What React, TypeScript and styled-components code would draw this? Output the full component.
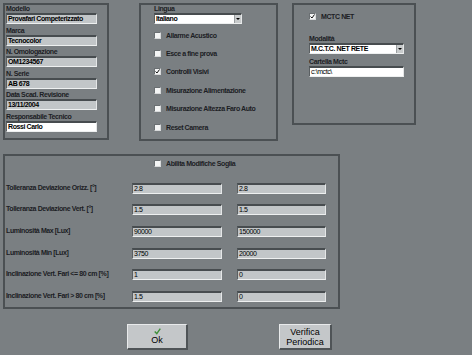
import { Fragment } from "react";
import styled, { createGlobalStyle, css } from "styled-components";

const BG = "#7a7f82";
const EDGE = "#4b5053";
const FIELD = "#c2c6c8";
const INK = "#1c2024";

// the original uses a condensed bold face; squeeze Liberation Sans to match
const tight = css`
  font-family: "Liberation Sans", Arial, sans-serif;
  font-size: 7px;
  letter-spacing: -0.4px;
`;

const GlobalStyle = createGlobalStyle`
  html, body {
    margin: 0;
    padding: 0;
    background: ${BG};
  }
  body {
    font-family: "Liberation Sans", Arial, sans-serif;
  }
`;

const Screen = styled.div`
  width: 472px;
  height: 355px;
  background: ${BG};
  overflow: hidden;
`;

const TopRow = styled.div`
  display: flex;
  align-items: flex-start;
  padding: 3px 0 0 3px;
`;

const Panel = styled.div<{ $w: number; $h: number; $ml?: number; $pl: number }>`
  box-sizing: border-box;
  width: ${(p) => p.$w}px;
  height: ${(p) => p.$h}px;
  margin-left: ${(p) => p.$ml ?? 0}px;
  padding-left: ${(p) => p.$pl}px;
  border: 2px solid ${EDGE};
  display: flex;
  flex-direction: column;
`;

const Stack = styled.div`
  display: flex;
  flex-direction: column;
  gap: 2.6px;
`;

const Group = styled.div`
  display: flex;
  flex-direction: column;
`;

const Label = styled.div<{ $mt?: number }>`
  ${tight};
  margin-top: ${(p) => p.$mt ?? 0}px;
  height: 8px;
  line-height: 8px;
  font-weight: bold;
  color: ${INK};
  white-space: nowrap;
`;

const Field = styled.div<{ $w: number; $white?: boolean; $bold?: boolean }>`
  ${tight};
  box-sizing: border-box;
  width: ${(p) => p.$w}px;
  height: 11px;
  background: ${(p) => (p.$white ? "#ffffff" : FIELD)};
  border-top: 2px solid #474c4f;
  border-left: 1px solid #5a5f62;
  border-bottom: 1px solid #eef0f0;
  border-right: 1px solid #e4e6e7;
  padding-left: 1px;
  line-height: 8px;
  font-weight: ${(p) => (p.$bold ? "bold" : "normal")};
  color: #000;
  white-space: nowrap;
  overflow: hidden;
`;

const SelectBox = styled(Field)`
  position: relative;
`;

const DropButton = styled.span`
  position: absolute;
  right: 0;
  top: 0;
  width: 6px;
  height: 8px;
  background: #c8cbcc;
  border-left: 1px solid #9a9ea0;
  display: flex;
  align-items: center;
  justify-content: center;
  &::after {
    content: "";
    border-left: 2px solid transparent;
    border-right: 2px solid transparent;
    border-top: 2px solid #000;
  }
`;

const CheckList = styled.div`
  margin-top: 2px;
  display: flex;
  flex-direction: column;
`;

const CheckRow = styled.div<{ $h: number; $ml?: number }>`
  display: flex;
  align-items: center;
  height: ${(p) => p.$h}px;
  margin-left: ${(p) => p.$ml ?? 0}px;
  gap: 5px;
`;

const Box = styled.span`
  box-sizing: border-box;
  width: 7px;
  height: 7px;
  background: #f4f5f5;
  border-top: 1px solid #6a6f72;
  border-left: 1px solid #6a6f72;
  border-bottom: 1px solid #d8dadb;
  border-right: 1px solid #d8dadb;
  display: flex;
  align-items: center;
  justify-content: center;
`;

const CheckText = styled.span`
  ${tight};
  font-weight: bold;
  color: ${INK};
  white-space: nowrap;
`;

const Panel4 = styled(Panel)`
  margin: 13px 0 0 3px;
`;

const Grid = styled.div`
  margin-top: 5.6px;
  display: grid;
  grid-template-columns: 111px 90px 89px;
  grid-auto-rows: 21.6px;
  column-gap: 15px;
  align-items: center;
  padding-left: 1px;
`;

const RowLabel = styled.div`
  ${tight};
  font-weight: bold;
  color: ${INK};
  white-space: nowrap;
  margin-top: -2px;
`;

const ButtonRow = styled.div`
  display: flex;
  margin-top: 15px;
  padding-left: 127px;
  gap: 91px;
`;

const Button = styled.div<{ $w: number }>`
  box-sizing: border-box;
  width: ${(p) => p.$w}px;
  height: 26px;
  background: #c4c7c9;
  border-top: 1px solid #e8eaeb;
  border-left: 1px solid #e8eaeb;
  border-right: 2px solid #4f5457;
  border-bottom: 2px solid #4f5457;
  display: flex;
  flex-direction: column;
  align-items: center;
  justify-content: center;
  font-size: 9px;
  line-height: 10px;
  color: #000;
  text-align: center;
`;

const Tick = ({ size = 5, color = "#111" }: { size?: number; color?: string }) => (
  <svg width={size} height={size} viewBox="0 0 10 10">
    <path d="M1 5 L4 8 L9 1" fill="none" stroke={color} strokeWidth={2} />
  </svg>
);

const Check = ({ label, checked, h, ml }: { label: string; checked?: boolean; h: number; ml?: number }) => (
  <CheckRow $h={h} $ml={ml}>
    <Box>{checked && <Tick />}</Box>
    <CheckText>{label}</CheckText>
  </CheckRow>
);

const info = [
  ["Modello", "Provafari Competerizzato", false],
  ["Marca", "Tecnocolor", false],
  ["N. Omologazione", "OM1234567", false],
  ["N. Serie", "AB 678", false],
  ["Data Scad. Revisione", "13/11/2004", false],
  ["Responsabile Tecnico", "Rossi Carlo", true],
] as const;

const options = [
  ["Allarme Acustico", false],
  ["Esce a fine prova", false],
  ["Controlli Visivi", true],
  ["Misurazione Alimentazione", false],
  ["Misurazione Altezza Faro Auto", false],
  ["Reset Camera", false],
] as const;

const thresholds = [
  ["Tolleranza Deviazione Orizz. [°]", "2.8", "2.8"],
  ["Tolleranza Deviazione Vert. [°]", "1.5", "1.5"],
  ["Luminosità Max [Lux]", "90000", "150000"],
  ["Luminosità Min [Lux]", "3750", "20000"],
  ["Inclinazione Vert. Fari <= 80 cm [%]", "1", "0"],
  ["Inclinazione Vert. Fari > 80 cm [%]", "1.5", "0"],
];

export default function App() {
  return (
    <Screen>
      <GlobalStyle />
      <TopRow>
        <Panel $w={106} $h={137} $pl={1}>
          <Stack>
            {info.map(([label, value, white]) => (
              <Group key={label}>
                <Label>{label}</Label>
                <Field $w={91} $white={white} $bold>
                  {value}
                </Field>
              </Group>
            ))}
          </Stack>
        </Panel>

        <Panel $w={139} $h={138} $ml={30} $pl={13}>
          <Label>Lingua</Label>
          <SelectBox $w={88} $white $bold>
            Italiano
            <DropButton />
          </SelectBox>
          <CheckList>
            {options.map(([label, checked]) => (
              <Check key={label} label={label} checked={checked} h={18.4} />
            ))}
          </CheckList>
        </Panel>

        <Panel $w={124} $h={122} $ml={14} $pl={15}>
          <Check label="MCTC NET" checked h={22} />
          <Label $mt={8}>Modalità</Label>
          <SelectBox $w={95} $white $bold>
            M.C.T.C. NET RETE
            <DropButton />
          </SelectBox>
          <Label $mt={4}>Cartella Mctc</Label>
          <Field $w={95} $white>
            c:\mctc\
          </Field>
        </Panel>
      </TopRow>

      <Panel4 $w={337} $h={155} $pl={0}>
        <Check label="Abilita Modifiche Soglia" h={16} ml={149} />
        <Grid>
          {thresholds.map(([label, a, b]) => (
            <Fragment key={label}>
              <RowLabel>{label}</RowLabel>
              <Field $w={90}>{a}</Field>
              <Field $w={89}>{b}</Field>
            </Fragment>
          ))}
        </Grid>
      </Panel4>

      <ButtonRow>
        <Button $w={61}>
          <Tick size={7} color="#3f8f3a" />
          <span>Ok</span>
        </Button>
        <Button $w={53}>
          <span>Verifica</span>
          <span>Periodica</span>
        </Button>
      </ButtonRow>
    </Screen>
  );
}
